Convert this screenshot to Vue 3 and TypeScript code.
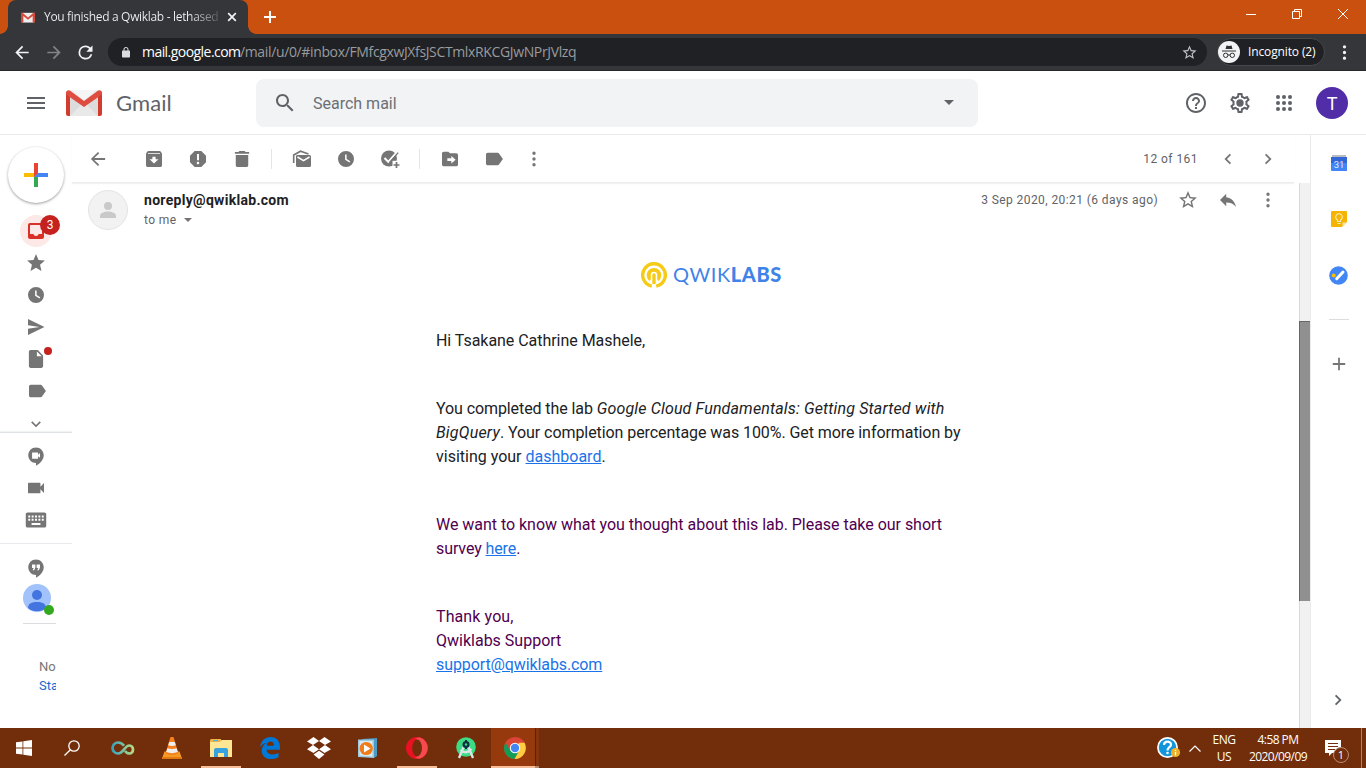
<script setup lang="ts">
const icons: Record<string, string> = {
  back: 'M20 11H7.83l5.59-5.59L12 4l-8 8 8 8 1.41-1.41L7.83 13H20v-2z',
  forward: 'M12 4l-1.41 1.41L16.17 11H4v2h12.17l-5.58 5.59L12 20l8-8z',
  reload: 'M17.65 6.35A7.96 7.96 0 0 0 12 4a8 8 0 1 0 7.73 10h-2.08A6 6 0 1 1 12 6c1.66 0 3.14.69 4.22 1.78L13 11h7V4l-2.35 2.35z',
  lock: 'M18 8h-1V6c0-2.76-2.24-5-5-5S7 3.24 7 6v2H6c-1.1 0-2 .9-2 2v10c0 1.1.9 2 2 2h12c1.1 0 2-.9 2-2V10c0-1.1-.9-2-2-2zM9 6c0-1.66 1.34-3 3-3s3 1.34 3 3v2H9V6z',
  starOutline: 'M22 9.24l-7.19-.62L12 2 9.19 8.63 2 9.24l5.46 4.73L5.82 21 12 17.27 18.18 21l-1.63-7.03L22 9.24zM12 15.4l-3.76 2.27 1-4.28-3.32-2.88 4.38-.38L12 6.1l1.71 4.04 4.38.38-3.32 2.88 1 4.28L12 15.4z',
  star: 'M12 17.27L18.18 21l-1.64-7.03L22 9.24l-7.19-.61L12 2 9.19 8.63 2 9.24l5.46 4.73L5.82 21z',
  more: 'M12 7.4a1.9 1.9 0 1 0 0-3.8 1.9 1.9 0 0 0 0 3.8zm0 6.5a1.9 1.9 0 1 0 0-3.8 1.9 1.9 0 0 0 0 3.8zm0 6.5a1.9 1.9 0 1 0 0-3.8 1.9 1.9 0 0 0 0 3.8z',
  menu: 'M3 18h18v-2H3v2zm0-5h18v-2H3v2zm0-7v2h18V6H3z',
  search: 'M15.5 14h-.79l-.28-.27C15.41 12.59 16 11.11 16 9.5 16 5.91 13.09 3 9.5 3S3 5.91 3 9.5 5.91 16 9.5 16c1.61 0 3.09-.59 4.23-1.57l.27.28v.79l5 4.99L20.49 19l-4.99-5zm-6 0C7.01 14 5 11.99 5 9.5S7.01 5 9.5 5 14 7.01 14 9.5 11.99 14 9.5 14z',
  help: 'M11 18h2v-2h-2v2zm1-16C6.48 2 2 6.48 2 12s4.48 10 10 10 10-4.48 10-10S17.52 2 12 2zm0 18c-4.41 0-8-3.59-8-8s3.59-8 8-8 8 3.59 8 8-3.59 8-8 8zm0-14c-2.21 0-4 1.79-4 4h2c0-1.1.9-2 2-2s2 .9 2 2c0 2-3 1.75-3 5h2c0-2.25 3-2.5 3-5 0-2.21-1.79-4-4-4z',
  gear: 'M19.43 12.98c.04-.32.07-.64.07-.98 0-.34-.03-.66-.07-.98l2.11-1.65c.19-.15.24-.42.12-.64l-2-3.46c-.09-.16-.26-.25-.44-.25-.06 0-.12.01-.17.03l-2.49 1c-.52-.4-1.08-.73-1.69-.98l-.38-2.65C14.46 2.18 14.25 2 14 2h-4c-.25 0-.46.18-.49.42l-.38 2.65c-.61.25-1.17.59-1.69.98l-2.49-1c-.06-.02-.12-.03-.18-.03-.17 0-.34.09-.43.25l-2 3.46c-.13.22-.07.49.12.64l2.11 1.65c-.04.32-.07.65-.07.98 0 .33.03.66.07.98l-2.11 1.65c-.19.15-.24.42-.12.64l2 3.46c.09.16.26.25.44.25.06 0 .12-.01.17-.03l2.49-1c.52.4 1.08.73 1.69.98l.38 2.65c.03.24.24.42.49.42h4c.25 0 .46-.18.49-.42l.38-2.65c.61-.25 1.17-.59 1.69-.98l2.49 1c.06.02.12.03.18.03.17 0 .34-.09.43-.25l2-3.46c.12-.22.07-.49-.12-.64l-2.11-1.65zm-1.98-1.71c.04.31.05.52.05.73 0 .21-.02.43-.05.73l-.14 1.13.89.7 1.08.84-.7 1.21-1.27-.51-1.04-.42-.9.68c-.43.32-.84.56-1.25.73l-1.06.43-.16 1.13-.2 1.35h-1.4l-.19-1.35-.16-1.13-1.06-.43c-.43-.18-.83-.41-1.23-.71l-.91-.7-1.06.43-1.27.51-.7-1.21 1.08-.84.89-.7-.14-1.13c-.03-.31-.05-.54-.05-.74s.02-.43.05-.73l.14-1.13-.89-.7-1.08-.84.7-1.21 1.27.51 1.04.42.9-.68c.43-.32.84-.56 1.25-.73l1.06-.43.16-1.13.2-1.35h1.39l.19 1.35.16 1.13 1.06.43c.43.18.83.41 1.23.71l.91.7 1.06-.43 1.27-.51.7 1.21-1.07.85-.89.7.14 1.13zM12 8.3a3.7 3.7 0 1 0 0 7.4 3.7 3.7 0 0 0 0-7.4z',
  archive: 'M19.5 3.6C19.2 3.2 18.6 3 18 3H6c-.6 0-1.2.2-1.5.6L3.4 5.2C3.1 5.6 3 6 3 6.5V19c0 1.1.9 2 2 2h14c1.1 0 2-.9 2-2V6.5c0-.5-.1-.9-.4-1.3zM12 17l-5-4.8h3.2V9.6h3.6v2.6H17zM5.2 5.2h13.6v.9H5.2z',
  spam: 'M15.73 3H8.27L3 8.27v7.46L8.27 21h7.46L21 15.73V8.27L15.73 3zM12 17.8c-.8 0-1.4-.6-1.4-1.4s.6-1.4 1.4-1.4 1.4.6 1.4 1.4-.6 1.4-1.4 1.4zm1.1-4.3h-2.2V6.5h2.2v7z',
  trash: 'M5 19c0 1.1.9 2 2 2h10c1.1 0 2-.9 2-2V7.6H5V19zM20 4h-4l-1-1H9L8 4H4v2h16V4z',
  clock: 'M12 3a9 9 0 1 0 0 18 9 9 0 0 0 0-18zm3.9 12.8L11 12.9V7h1.7v5l4.1 2.4z',
  move: 'M19 5.6h-7L10.2 3.8H5c-1.1 0-2 .9-2 2v12.4c0 1.1.9 2 2 2h14c1.1 0 2-.9 2-2V7.6c0-1.1-.9-2-2-2zM13.5 17v-2.7H9v-3.1h4.500V8.5l4.800 4.250z',
  label: 'M17.63 5.84C17.27 5.33 16.67 5 16 5L5 5.01C3.9 5.01 3 5.9 3 7v10c0 1.1.9 1.99 2 1.99L16 19c.67 0 1.27-.33 1.63-.84L22 12l-4.37-6.16z',
  prev: 'M15.41 7.41L14 6l-6 6 6 6 1.41-1.41L10.83 12z',
  next: 'M10 6L8.59 7.41 13.17 12l-4.58 4.59L10 18l6-6z',
  down: 'M7.41 8.59L12 13.17l4.59-4.58L18 10l-6 6-6-6z',
  reply: 'M10 9V5l-7 7 7 7v-4.1c5 0 8.5 1.6 11 5.1-1-5-4-10-11-11z',
  send: 'M3 21l18.5-9L3 3v7l13 2-13 2z',
  file: 'M6 2c-1.1 0-2 .9-2 2v16c0 1.1.9 2 2 2h12c1.1 0 2-.9 2-2V8l-6-6H6zm7 7V3.5L18.5 9H13z',
  video: 'M17 10.500V7c0-.55-.45-1-1-1H4c-.55 0-1 .45-1 1v10c0 .55.45 1 1 1h12c.55 0 1-.45 1-1v-3.500l4 4v-11l-4 4z',
  keyboard: 'M21.500 3.500h-19C1.200 3.500.5 4.300.5 5.500v13c0 1.200.7 2 2 2h19c1.300 0 2-.8 2-2v-13c0-1.200-.7-2-2-2zM3.300 7h2.200v2.200H3.300zm3.800 0h2.200v2.200H7.100zm3.800 0h2.200v2.200h-2.200zm3.800 0h2.200v2.200h-2.200zm3.800 0h2.200v2.200h-2.200zM3.300 10.700h2.200v2.200H3.300zm3.800 0h2.200v2.200H7.100zm3.800 0h2.200v2.200h-2.200zm3.800 0h2.200v2.200h-2.200zm3.800 0h2.200v2.200h-2.200zM7 15.500h10v2.200H7z',
  meet: 'M12 2.500c-4.900 0-8.700 3.900-8.700 8.700 0 4.900 3.800 8.700 8.700 8.700V23c5-2.400 8.700-7.200 8.700-11.800 0-4.800-3.800-8.700-8.700-8.700zM16.500 14l-2.200-1.700V15H7.600V8h6.700v2.500L16.500 8.700z',
  hangouts: 'M12 2.500c-4.900 0-8.700 3.900-8.700 8.700 0 4.900 3.800 8.700 8.700 8.700V23c5-2.400 8.700-7.200 8.700-11.800 0-4.800-3.800-8.700-8.700-8.700zM11.300 11.500l-1.300 3H8.200l1.200-2.600H7.500V8h3.800zm5.200 0l-1.300 3h-1.800l1.200-2.600h-1.900V8h3.800z',
  plus: 'M19 13h-6v6h-2v-6H5v-2h6V5h2v6h6v2z',
}
const railIcons = ['star', 'clock', 'send', 'file', 'label']
const meetIcons = ['meet', 'video', 'keyboard']
</script>

<template>
  <div class="screen">
    <header class="tabs">
      <div class="tab">
        <svg class="favicon" viewBox="0 0 36 26"><path fill="#eee" d="M3 1h30v25H3z"/><path fill="#d54b3d" d="M0 2.500C0 0 3 0 4 1l14 12L32 1c2-1 4-1 4 1.500V26h-6V9L18 19 6 9v17H0z"/></svg>
        <span class="tab-title">You finished a Qwiklab - lethased</span>
        <svg class="tab-x" viewBox="0 0 10 10"><path d="M1.200 1.200l7.600 7.600M8.800 1.200L1.200 8.800"/></svg>
      </div>
      <svg class="tab-plus" viewBox="0 0 12 12"><path d="M6 0v12M0 6h12"/></svg>
      <div class="win">
        <svg viewBox="0 0 12 12"><path d="M1 6.500h10"/></svg>
        <svg viewBox="0 0 12 12"><path d="M1.500 3.500h7v7h-7zM3.500 3.500v-2h7v7h-2"/></svg>
        <svg viewBox="0 0 12 12"><path d="M1 1l10 10M11 1L1 11"/></svg>
      </div>
    </header>

    <div class="nav">
      <svg class="ic n1" viewBox="0 0 24 24"><path :d="icons.back"/></svg>
      <svg class="ic n2" viewBox="0 0 24 24"><path :d="icons.forward"/></svg>
      <svg class="ic n3" viewBox="0 0 24 24"><path :d="icons.reload"/></svg>
      <div class="omni">
        <svg class="lock" viewBox="0 0 24 24"><path :d="icons.lock"/></svg>
        <span class="host">mail.google.com</span><span class="path">/mail/u/0/#inbox/FMfcgxwJXfsJSCTmlxRKCGJwNPrJVlzq</span>
        <svg class="omni-star" viewBox="0 0 24 24"><path :d="icons.starOutline"/></svg>
      </div>
      <div class="incog">
        <svg viewBox="0 0 22 22"><circle cx="11" cy="11" r="11" fill="#f1f3f4"/><g fill="#303134"><path d="M7.500 8l1-3.500 2.500.5 2.500-.5 1 3.500z"/><path d="M4 9.500h14v1H4z"/></g><g fill="none" stroke="#303134"><circle cx="7.700" cy="14.300" r="2.200"/><circle cx="14.300" cy="14.300" r="2.200"/><path d="M9.900 14h2.200"/></g></svg>
        <span>Incognito (2)</span>
      </div>
      <svg class="ic dots" viewBox="0 0 24 24"><path :d="icons.more"/></svg>
    </div>

    <div class="ghead">
      <svg class="ic menu" viewBox="0 0 24 24"><path :d="icons.menu"/></svg>
      <svg class="glogo" viewBox="0 0 36 26">
        <path fill="#ececec" d="M3 0h30v26H3z"/><path fill="#dcdcdc" d="M4 26V6l14 11 14-11v20z"/><path fill="#e9e9e9" d="M4 26l11-11 3 2 3-2 11 11z"/><path fill="#f5f5f5" d="M6 0h24L18 10z"/>
        <path fill="#d33b2c" d="M0 2v22c0 1 1 2 2 2h2V5zM36 2v22c0 1-1 2-2 2h-2V5z"/><path fill="#df4c40" d="M0 2.500C0 .3 2.500-.6 4.200.8L18 11 31.800.8C33.500-.6 36 .3 36 2.500c0 1.400-.6 2.200-1.500 2.900L18 17 1.500 5.400C.6 4.700 0 3.900 0 2.500z"/>
      </svg>
      <span class="gname">Gmail</span>
      <div class="search">
        <svg class="ic" viewBox="0 0 24 24"><path :d="icons.search"/></svg>
        <span>Search mail</span>
        <svg class="drop" viewBox="0 0 10 5"><path d="M0 0h10L5 5z"/></svg>
      </div>
      <div class="gactions">
        <svg class="ic" viewBox="0 0 24 24"><path :d="icons.help"/></svg>
        <svg class="ic" viewBox="0 0 24 24"><path :d="icons.gear"/></svg>
        <svg class="ic" viewBox="0 0 24 24"><template v-for="r in 3" :key="r"><circle v-for="c in 3" :key="c" :cx="c * 6" :cy="r * 6" r="2.050"/></template></svg>
        <div class="me">T</div>
      </div>
    </div>

    <div class="body">
      <aside class="rail">
        <div class="compose"><svg viewBox="0 0 24 24"><path fill="#ea4335" d="M10 0h4v10l-4 4z"/><path fill="#fbbc04" d="M0 10h10v4H0z"/><path fill="#34a853" d="M10 14l4-4v14h-4z"/><path fill="#4285f4" d="M14 10h10v4H10z"/><path fill="#ea4335" d="M10 10h4l-4 4z"/></svg></div>
        <div class="rcell"><div class="halo"><svg viewBox="0 0 16 16"><path fill-rule="evenodd" d="M2 0h12a2 2 0 0 1 2 2v12a2 2 0 0 1-2 2H2a2 2 0 0 1-2-2V2a2 2 0 0 1 2-2zm0 2v9h3.300a2.800 2.800 0 0 0 5.400 0H14V2z"/></svg></div><b class="count">3</b></div>
        <div v-for="n in railIcons" :key="n" class="rcell" :class="n"><svg class="gi" viewBox="0 0 24 24"><path :d="icons[n]"/></svg><i v-if="n === 'file'" class="reddot"></i></div>
        <div class="rcell chev"><svg class="gi" viewBox="0 0 24 24"><path :d="icons.down"/></svg></div>
        <div class="meet">
          <div v-for="n in meetIcons" :key="n" class="rcell"><svg class="gi" viewBox="0 0 24 24"><path :d="icons[n]" fill-rule="evenodd"/></svg></div>
        </div>
        <div class="chat">
          <div class="rcell"><svg class="gi" viewBox="0 0 24 24"><path :d="icons.hangouts"/></svg></div>
          <div class="buddy"><svg viewBox="0 0 28 28"><circle cx="14" cy="14" r="14" fill="#a1c2fa"/><circle cx="14" cy="11" r="5" fill="#4374e0"/><path fill="#4374e0" d="M5 24c0-4.500 4-6 9-6s9 1.500 9 6a14 14 0 0 1-18 0z"/></svg><i></i></div>
          <div class="sep"></div>
          <div class="clip"><span>No</span><a>Sta</a></div>
        </div>
      </aside>

      <main>
        <div class="bar">
          <div class="cell"><svg class="gi" viewBox="0 0 24 24"><path :d="icons.back"/></svg></div>
          <div class="cell first"><svg class="gi" viewBox="0 0 24 24"><path :d="icons.archive"/></svg></div>
          <div class="cell"><svg class="gi" viewBox="0 0 24 24"><path :d="icons.spam"/></svg></div>
          <div class="cell"><svg class="gi" viewBox="0 0 24 24"><path :d="icons.trash"/></svg></div>
          <i class="vr"></i>
          <div class="cell"><svg class="unread" viewBox="0 0 20 18"><path d="M5 5h12.500A1.500 1.500 0 0 1 19 6.500v9a1.500 1.500 0 0 1-1.500 1.500h-12A1.500 1.500 0 0 1 4 15.500v-9A1.500 1.500 0 0 1 5 5z"/><path d="M1.700 13V5L8.500 1.200 16.500 4" fill="none" stroke="#757575" stroke-width="1.600"/><path d="M5.500 7l6 3.700 6-3.700" fill="none" stroke="#fff" stroke-width="1.500"/></svg></div>
          <div class="cell"><svg class="gi" viewBox="0 0 24 24"><path :d="icons.clock"/></svg></div>
          <div class="cell"><svg class="task" viewBox="0 0 20 20"><circle cx="9" cy="9.500" r="8"/><path d="M4.500 9l3.700 3.800L17.500 2.500" fill="none" stroke="#fff" stroke-width="2"/><path d="M9.800 13.300L18.200 3.600" fill="none" stroke="#757575" stroke-width="1.300"/><path d="M12.500 11.800h8v8h-8z" fill="#fff"/><path d="M16.500 13v6M13.500 16h6" fill="none" stroke="#757575" stroke-width="1.700"/></svg></div>
          <i class="vr"></i>
          <div class="cell"><svg class="gi" viewBox="0 0 24 24"><path :d="icons.move"/></svg></div>
          <div class="cell"><svg class="gi" viewBox="0 0 24 24"><path :d="icons.label"/></svg></div>
          <div class="cell narrow"><svg class="gi" viewBox="0 0 24 24"><path :d="icons.more"/></svg></div>
          <span class="page">12 of 161</span>
          <div class="cell pg"><svg class="gi" viewBox="0 0 24 24"><path :d="icons.prev"/></svg></div>
          <div class="cell pg"><svg class="gi" viewBox="0 0 24 24"><path :d="icons.next"/></svg></div>
        </div>

        <div class="mail">
          <div class="content">
            <div class="from">
              <div class="avatar"><svg viewBox="0 0 16 16"><circle cx="8" cy="4" r="4"/><path d="M0 16v-2c0-3 4-4.500 8-4.500s8 1.500 8 4.500v2z"/></svg></div>
              <div class="who"><b>noreply@qwiklab.com</b><span>to me<svg viewBox="0 0 8 4"><path d="M0 0h8L4 4z"/></svg></span></div>
              <div class="meta">
                <span>3 Sep 2020, 20:21 (6 days ago)</span>
                <div class="cell pg"><svg class="gi" viewBox="0 0 24 24"><path :d="icons.starOutline"/></svg></div>
                <div class="cell pg"><svg class="gi" viewBox="0 0 24 24"><path :d="icons.reply"/></svg></div>
                <div class="cell pg"><svg class="gi" viewBox="0 0 24 24"><path :d="icons.more"/></svg></div>
              </div>
            </div>
            <div class="qlogo">
              <svg viewBox="0 0 26 26"><path fill="none" stroke="#f5cb17" stroke-width="3.400" d="M10.800 24.200a11.300 11.300 0 1 1 4.400 0"/><path fill="#f5cb17" d="M8.500 19a7.300 7.300 0 1 1 9 0l-1.300-1.500v-4.500a3.200 3.200 0 0 0-6.400 0v4.500z"/><path fill="#f5cb17" d="M11.300 22v-9a1.700 1.700 0 0 1 3.400 0v9z"/></svg>
              <span>QWIK<b>LABS</b></span>
            </div>
            <article>
              <p><span class="l1">Hi Tsakane Cathrine Mashele,</span></p>
              <p><span class="l2">You completed the lab <em>Google Cloud Fundamentals: Getting Started with</em></span><br><span class="l3"><em>BigQuery</em>. Your completion percentage was 100%. Get more information by</span><br>visiting your <a>dashboard</a>.</p>
              <p class="q"><span class="l5">We want to know what you thought about this lab. Please take our short</span><br><span class="l6">survey <a>here</a>.</span></p>
              <p class="q"><span class="l7">Thank you,</span><br>Qwiklabs Support<br><a class="l9">support@qwiklabs.com</a></p>
            </article>
          </div>
          <div class="scroll"><div class="thumb"></div></div>
        </div>
      </main>

      <aside class="side">
        <svg class="cal" viewBox="0 0 16 16"><path fill="#b9bcc2" d="M1 0h14v3H1z"/><path fill="#3367d6" d="M0 2h16v7H0z"/><path fill="#4285f4" d="M0 8h16v8H1a1 1 0 0 1-1-1z"/><text x="8" y="13" text-anchor="middle" font-size="9.500" fill="#e5edfb" font-family="Roboto, sans-serif">31</text></svg>
        <svg class="keep" viewBox="0 0 16 16"><path fill="#f5b400" d="M1 0h14a1 1 0 0 1 1 1v10l-5 5H1a1 1 0 0 1-1-1V1a1 1 0 0 1 1-1z"/><path fill="#fce199" d="M16 11.500L11.500 16v-4.500z"/><path fill="none" stroke="#fdeebf" stroke-width="1.100" d="M6.500 10.500V9a3.300 3.300 0 1 1 3 0v1.500zM6.500 12.500h3"/></svg>
        <svg class="tasks" viewBox="0 0 19 19"><circle cx="9.500" cy="9.500" r="9.300" fill="#4285f4"/><circle cx="4.700" cy="9.500" r="2" fill="#fbbc04"/><path d="M7.700 12.700l6.300-6.700" stroke="#fff" stroke-width="3" stroke-linecap="round"/></svg>
        <div class="hr"></div>
        <svg class="gi add" viewBox="0 0 24 24"><path :d="icons.plus"/></svg>
        <svg class="gi hide" viewBox="0 0 24 24"><path :d="icons.next"/></svg>
      </aside>
    </div>

    <footer class="task-bar">
      <div class="t start"><svg viewBox="0 0 16 16" width="16" height="16"><path fill="#fff" d="M0 2.300l6.500-.9v6.200H0zM7.300 1.300L16 0v7.600H7.300zM0 8.400h6.500v6.200L0 13.700zM7.300 8.400H16V16l-8.700-1.200z"/></svg></div>
      <div class="t find"><svg viewBox="0 0 16 16" width="16" height="16"><g fill="none" stroke="#fff" stroke-width="1.300"><circle cx="10" cy="6" r="5.200"/><path d="M6.400 9.700L.5 15.500"/></g></svg></div>
      <div class="t"><svg viewBox="0 0 24 14" width="24" height="14"><defs><linearGradient id="inf"><stop stop-color="#38a5bd"/><stop offset="1" stop-color="#b4da83"/></linearGradient></defs><path fill="none" stroke="url(#inf)" stroke-width="2.700" d="M13 4.800C11.500 2.600 9.600 1.500 7 1.500a5.500 5.500 0 1 0 0 11c5.500 0 6.500-8 11.500-8a3.500 4 0 1 1 0 8c-2 0-3.500-1-4.500-2.500"/></svg></div>
      <div class="t"><svg viewBox="0 0 20 22" width="20" height="22"><path fill="#f59a24" d="M2.500 14.500h15L20 21.500H0z"/><path fill="#e17810" d="M0 20h20v2H0z"/><path fill="#f4811d" d="M8.500 0h3l5 16.500q-6.500 3-13 0z"/><path fill="#eee" d="M7.200 5h5.600l1 3.200q-3.800 1.500-7.600 0zM5.300 11.300q4.700 1.500 9.400 0l1.100 3.700q-5.800 2.300-11.600 0z"/></svg></div>
      <div class="t open"><svg viewBox="0 0 22 18" width="22" height="18"><path fill="#eeb547" d="M1 0h10v4H0V1z"/><path fill="#ffe694" d="M0 3h10l1.500-2H22v17H0z"/><path fill="#36a3e0" d="M4 18v-7a2 2 0 0 1 2-2h10a2 2 0 0 1 2 2v7h-4v-4H8v4z"/><path fill="#47b7ef" d="M3 1h5v1.200H3z"/></svg></div>
      <div class="t"><svg viewBox="0 0 20 22" width="20" height="22"><path fill="#0078d7" d="M0 10C1 3.500 5.300 0 10.500 0 16.500 0 20 4.300 20 10v2.800H6.500c.3 3.300 3.200 4.700 6 4.700 2.300 0 4.200-.6 6-1.700v4.500A15 15 0 0 1 11 22c-5.700 0-9.300-3.500-9.300-8.300 0-3.700 2-6.600 5.200-8C4 6.200 1.700 7.700 0 10zm6.700-1.300h7.200c0-2.600-1.200-4.100-3.400-4.100-2.100 0-3.500 1.700-3.800 4.100z"/></svg></div>
      <div class="t"><svg viewBox="0 0 24 22" width="24" height="22"><path fill="#fff" d="M6.500 0L12 4 6 8 0 4.500zM17.500 0L12 4l6 4 6-3.500zM0 12.200L6 8l6 4.200L6.500 16zM24 12.200L18 8l-6 4.200 5.500 3.800zM6.500 17.500L12 13.700l5.500 3.800L12 22z"/></svg></div>
      <div class="t"><svg viewBox="0 0 20 20" width="20" height="20"><path fill="#4b9bc5" d="M4 1l15-1v18l-3 2z"/><path fill="#9cc9df" d="M0 1.500h16V20L0 19z"/><path fill="#d8ebf3" d="M1.500 3h13v15.500l-13-.9z"/><circle cx="8.200" cy="10.500" r="6.600" fill="#f07c1a"/><path fill="#fff" d="M6 6.500l6.500 4L6 14.600z"/></svg></div>
      <div class="t open"><svg viewBox="0 0 22 22" width="22" height="22"><circle cx="11" cy="11" r="11" fill="#e81224"/><path d="M14 .5a11 11 0 0 1 0 21c-2 .5-4-.5-5-1.500 5-1 7-5 7-9S14 3 9 2c1.500-1.300 3.500-1.800 5-1.500z" fill="#f54a4f"/><ellipse cx="11" cy="11" rx="4.800" ry="8.500" fill="#722e0b"/></svg></div>
      <div class="t"><svg viewBox="0 0 20 22" width="20" height="22"><circle cx="10" cy="10" r="9.800" fill="#3ddc84"/><g fill="none" stroke="#dce5e8" stroke-width="2.300"><path d="M8.500 8L3 21M11.500 8L17 21M4.500 13q5.500 5 11-1"/></g><circle cx="10" cy="7.500" r="3.500" fill="#073042"/><path d="M9 3h2v9H9z" fill="#073042"/><circle cx="10" cy="7.500" r="1.200" fill="#3ddc84"/></svg></div>
      <div class="t active"><svg viewBox="0 0 22 22" width="22" height="22"><circle cx="11" cy="11" r="11" fill="#db4437"/><path fill="#0f9d58" d="M1.500 5.500A11 11 0 0 0 10.500 22l4.800-8.500H6.200z"/><path fill="#ffcd40" d="M20.500 5.800A11 11 0 0 1 10.500 22l4.800-8.500-.8-7.700z"/><circle cx="11" cy="11" r="5.200" fill="#fff"/><circle cx="11" cy="11" r="4.200" fill="#4285f4"/></svg></div>
      <div class="tray">
        <svg class="qm" viewBox="0 0 24 22"><circle cx="10.500" cy="10.500" r="9.600" fill="#1296db" stroke="#fff" stroke-width="1.700"/><path fill="none" stroke="#fff" stroke-width="2.200" d="M7 8c0-4.500 7-4.500 7-.5 0 3-3.500 2.500-3.500 6"/><circle cx="10.500" cy="16" r="1.300" fill="#fff"/><circle cx="18.500" cy="15.500" r="4.600" fill="#eeb027"/><path d="M18.500 12.700v1.300M18.500 15v3.300" stroke="#fff" stroke-width="1.300"/></svg>
        <svg class="up" viewBox="0 0 12 7"><path d="M.5 6.500L6 1l5.500 5.500"/></svg>
        <div class="lang"><span>ENG</span><span>US</span></div>
        <div class="time"><span>4:58 PM</span><span>2020/09/09</span></div>
        <div class="note"><svg viewBox="0 0 16 16"><path fill="#fff" d="M0 0h16v13H7l-3 3v-3H0z"/><path d="M3 3.500h10M3 6.500h10M3 9.500h7" stroke="#722e0b"/></svg><i>1</i></div>
        <div class="desk"></div>
      </div>
    </footer>
  </div>
</template>

<style>
html, body { margin: 0; overflow: hidden; background: #fff; }
</style>

<style scoped>
* { box-sizing: border-box; }
.screen { width: 1366px; height: 768px; display: flex; flex-direction: column; background: #fff; overflow: hidden; font-family: Roboto, sans-serif; color: #202124; }
svg { display: block; flex: none; }
.ic { width: 24px; height: 24px; fill: #5f6368; }
.gi { width: 22px; height: 22px; padding: .333px; fill: #757575; }

.tabs { height: 34px; background: #ca5010; display: flex; align-items: center; padding-left: 8px; flex: none; }
.tab { position: relative; width: 240px; height: 34px; background: #35363a; border-radius: 8px 8px 0 0; display: flex; align-items: center; padding-left: 13px; }
.tab::before, .tab::after { content: ""; position: absolute; bottom: 0; width: 8px; height: 8px; }
.tab::before { left: -8px; background: radial-gradient(circle at 0 0, transparent 7.5px, #35363a 8px); }
.tab::after { right: -8px; background: radial-gradient(circle at 100% 0, transparent 7.5px, #35363a 8px); }
.favicon { width: 14px; height: 11px; }
.tab-title { margin-left: 9px; width: 175px; overflow: hidden; white-space: nowrap; font: 12px/18px "Open Sans", sans-serif; letter-spacing: -.32px; color: transparent; background: linear-gradient(90deg, #f1f3f4 83%, #55565a); background-clip: text; -webkit-background-clip: text; }
.tab-x { width: 10px; height: 10px; margin-left: 8px; stroke: #f1f3f4; stroke-width: 1.7; }
.tab-plus { width: 12px; height: 12px; margin-left: 16px; stroke: #fff; stroke-width: 2; }
.win { margin-left: auto; display: flex; gap: 34px; padding: 0 17px 6px 0; }
.win svg { width: 12px; height: 12px; fill: none; stroke: #fff; stroke-width: 1; }

.nav { height: 37px; flex: none; background: #35363a; border-bottom: 1px solid #27282b; display: flex; align-items: center; }
.nav .ic { width: 21px; height: 21px; fill: #f1f3f4; }
.nav .n1 { margin-left: 12px; width: 20px; }
.nav .n2 { margin-left: 12px; width: 20px; fill: #828386; }
.nav .n3 { margin-left: 11px; }
.omni { height: 28px; width: 1099px; margin-left: 12px; border-radius: 14px; background: #202124; display: flex; align-items: center; padding-left: 12px; font: 14px/20px "Open Sans", sans-serif; white-space: nowrap; }
.lock { width: 12px; height: 13px; fill: #dadce0; margin-right: 10px; }
.host { color: #fff; width: 98px; letter-spacing: -.55px; }
.path { color: #989b9f; letter-spacing: -.36px; }
.omni-star { width: 17px; height: 17px; fill: #bdc1c6; margin: 0 9px 0 auto; }
.incog { margin-left: 10px; width: 108px; height: 28px; border: 1px solid #47484c; border-radius: 14px; background: #202124; display: flex; align-items: center; color: #fff; font: 12px/18px "Open Sans", sans-serif; letter-spacing: -.13px; white-space: nowrap; }
.incog svg { width: 22px; height: 22px; margin: 0 8px 0 0; }
.nav .dots { margin-left: 9px; }

.ghead { height: 64px; flex: none; border-bottom: 1px solid #ebebeb; display: flex; align-items: center; }
.menu { margin-left: 24px; }
.glogo { width: 36px; height: 26px; margin-left: 18px; }
.gname { margin-left: 14px; width: 140px; font: 22px/30px Lato, sans-serif; color: #5f6368; letter-spacing: .1px; }
.search { width: 722px; height: 48px; border-radius: 8px; background: #f1f3f4; display: flex; align-items: center; padding: 0 24px 0 17px; color: #6b6f74; font-size: 16px; }
.search span { margin-left: 16px; padding-top: 2px; }
.drop { width: 10px; height: 5px; fill: #5f6368; margin-left: auto; }
.gactions { margin-left: auto; display: flex; align-items: center; gap: 20px; padding-right: 18px; }
.me { width: 32px; height: 32px; border-radius: 50%; background: #512da8; color: #fff; font-size: 18px; line-height: 34px; text-align: center; }

.body { height: 593px; flex: none; display: flex; }
.rail { width: 72px; display: flex; flex-direction: column; overflow: hidden; }
.compose { width: 56px; height: 56px; margin: 12px 8px; border-radius: 50%; background: #fff; box-shadow: 0 1px 3px rgba(60, 64, 67, .35), 0 1px 2px rgba(60, 64, 67, .2); display: grid; place-items: center; flex: none; }
.compose svg { width: 24px; height: 24px; }
.rcell { position: relative; width: 72px; height: 32px; display: grid; place-items: center; flex: none; }
.halo { width: 32px; height: 32px; border-radius: 50%; background: #fce8e6; display: grid; place-items: center; }
.halo svg { width: 16px; height: 16px; fill: #d93025; }
.count { position: absolute; left: 40px; top: 0; width: 20px; height: 20px; border-radius: 50%; background: #c5221f; color: #fff; font: 12px/20px Roboto, sans-serif; text-align: center; }
.reddot { position: absolute; left: 44px; top: 4px; width: 8px; height: 8px; border-radius: 50%; background: #c5221f; }
.label { padding-left: 2px; }
.chev { height: 26px; padding-top: 7px; border-bottom: 1px solid #dfe2e5; background: linear-gradient(#fff 23px, #eef0f1 25px); }
.chev .gi { width: 20px; height: 20px; }
.meet { height: 111px; padding-top: 7px; border-bottom: 1px solid #e8eaed; }
.chat { padding-top: 8px; }
.buddy { position: relative; width: 28px; height: 28px; margin-left: 23px; }
.buddy i { position: absolute; left: 21px; top: 21px; width: 10px; height: 10px; border-radius: 50%; background: #34a81f; }
.sep { margin: 11px 0 0 23px; width: 33px; height: 1px; background: #dadce0; }
.clip { margin: 33px 0 0 39px; width: 17px; overflow: hidden; white-space: nowrap; font-size: 13px; line-height: 19px; color: #777; display: flex; flex-direction: column; }
.clip a { color: #1967d2; }

main { width: 1238px; display: flex; flex-direction: column; }
.bar { height: 48px; display: flex; align-items: center; padding: 1px 0 0 4px; border-bottom: 1px solid #ececec; box-shadow: 0 1px 1px rgba(0, 0, 0, .05); margin-right: 16px; z-index: 1; }
.cell { width: 44px; height: 32px; display: grid; place-items: center; flex: none; }
.first { margin-left: 12px; }
.narrow { width: 36px; }
.pg { width: 40px; }
.vr { width: 1px; height: 20px; background: #e3e5e7; margin: 0 8px 0 7px; }
.unread { width: 20px; height: 18px; fill: #757575; }
.task { width: 20px; height: 20px; fill: #757575; }
.page { margin-left: auto; margin-right: 10px; font-size: 12px; color: #5f6368; letter-spacing: .45px; }
.bar .cell:last-child { margin-right: 6px; }
.mail { height: 545px; display: flex; }
.content { width: 1227px; }
.from { height: 48px; display: flex; padding: 7px 11px 0 16px; align-items: flex-start; }
.avatar { width: 40px; height: 40px; border-radius: 50%; border: 1px solid #e4e4e4; background: #f2f2f2; display: grid; place-items: center; }
.avatar svg { width: 16px; height: 16px; fill: #c9c9c9; }
.who { margin-left: 16px; display: flex; flex-direction: column; }
.who b { font: 700 14px/20px Roboto, sans-serif; letter-spacing: .3px; }
.who span { display: flex; align-items: center; font-size: 12px; line-height: 20px; color: #5f6368; letter-spacing: .4px; }
.who span svg { width: 8px; height: 4px; margin-left: 7px; fill: #757575; }
.meta { margin-left: auto; display: flex; align-items: center; height: 20px; font-size: 12px; color: #5f6368; }
.meta > span { letter-spacing: .42px; margin-right: 10px; }
.qlogo { display: flex; align-items: center; height: 26px; margin: 31px 0 0 569px; font: 20px/26px Lato, sans-serif; color: #3f83e8; letter-spacing: .6px; }
.qlogo svg { width: 26px; height: 26px; margin-right: 6px; }
.qlogo span { margin-top: -2px; }
.qlogo b { font-weight: 900; }
article { margin: 41px 0 0 364px; font-size: 16px; line-height: 24px; white-space: nowrap; }
p { margin: 0 0 44px; }
.l1 { letter-spacing: -.04px; }
.l2 { letter-spacing: -.09px; }
.l2 em { letter-spacing: .157px; }
.l3 { letter-spacing: -.07px; }
.l3 em { letter-spacing: .2px; }
.l5 { letter-spacing: -.03px; }
.l6, .l9 { letter-spacing: -.1px; }
.l7 { letter-spacing: .1px; }
.q { color: #500050; }
article a { color: #1a73e8; text-decoration: underline; }
.scroll { width: 11px; background: #f1f1f1; border-left: 1px solid #d9d9d9; padding-top: 138px; }
.thumb { height: 280px; background: #909090; border-top: 1px solid #686868; border-left: 1px solid #686868; margin-left: -1px; }

.side { width: 56px; border-left: 1px solid #ebebeb; display: flex; flex-direction: column; align-items: flex-start; padding-left: 20px; }
.cal, .keep { width: 16px; height: 16px; }
.cal { margin-top: 20px; }
.keep { margin-top: 40px; }
.tasks { width: 19px; height: 19px; margin: 39px 0 0 -2px; }
.hr { width: 20px; height: 1px; background: #dadce0; margin: 34px 0 0 -2px; }
.side .gi { margin-left: -3px; }
.add { margin-top: 33px; }
.side .hide { margin: auto 0 17px -4px; fill: #5f6368; }

.task-bar { height: 40px; flex: none; background: #722e0b; display: flex; color: #fff; }
.t { position: relative; width: 49px; height: 40px; display: grid; place-items: center; }
.start { width: 48px; }
.find { width: 50px; padding-right: 2px; }
.open::after, .active::after { content: ""; position: absolute; left: 5px; bottom: 0; width: 40px; height: 2px; background: #f7bd97; }
.active { background: linear-gradient(90deg, #722e0b 1px, #963a0e 1px 45px, #5a2409 45px 46px, #843611 46px); }
.active::after { left: 1px; width: 48px; background: linear-gradient(90deg, #f7bd97 44px, #b58a70 44px); }
.tray { margin-left: auto; display: flex; align-items: center; font: 12px/17px "Open Sans", sans-serif; }
.qm { width: 24px; height: 22px; margin-right: 8px; }
.up { width: 12px; height: 7px; fill: none; stroke: #fff; stroke-width: 1.2; }
.lang, .time { display: flex; flex-direction: column; align-items: center; white-space: nowrap; }
.lang { width: 26px; margin-left: 10px; letter-spacing: -.5px; }
.time { width: 60px; margin-left: 11px; letter-spacing: -.55px; }
.note { position: relative; width: 25px; margin-left: 17px; }
.note svg { width: 16px; height: 16px; }
.note i { position: absolute; left: 8px; top: 7px; width: 16px; height: 16px; border: 1px solid #b78d79; border-radius: 50%; background: #722e0b; font: 11px/14px "Open Sans", sans-serif; text-align: center; }
.desk { width: 5px; height: 40px; border-left: 1px solid #b1836c; margin-left: 11px; }
</style>
